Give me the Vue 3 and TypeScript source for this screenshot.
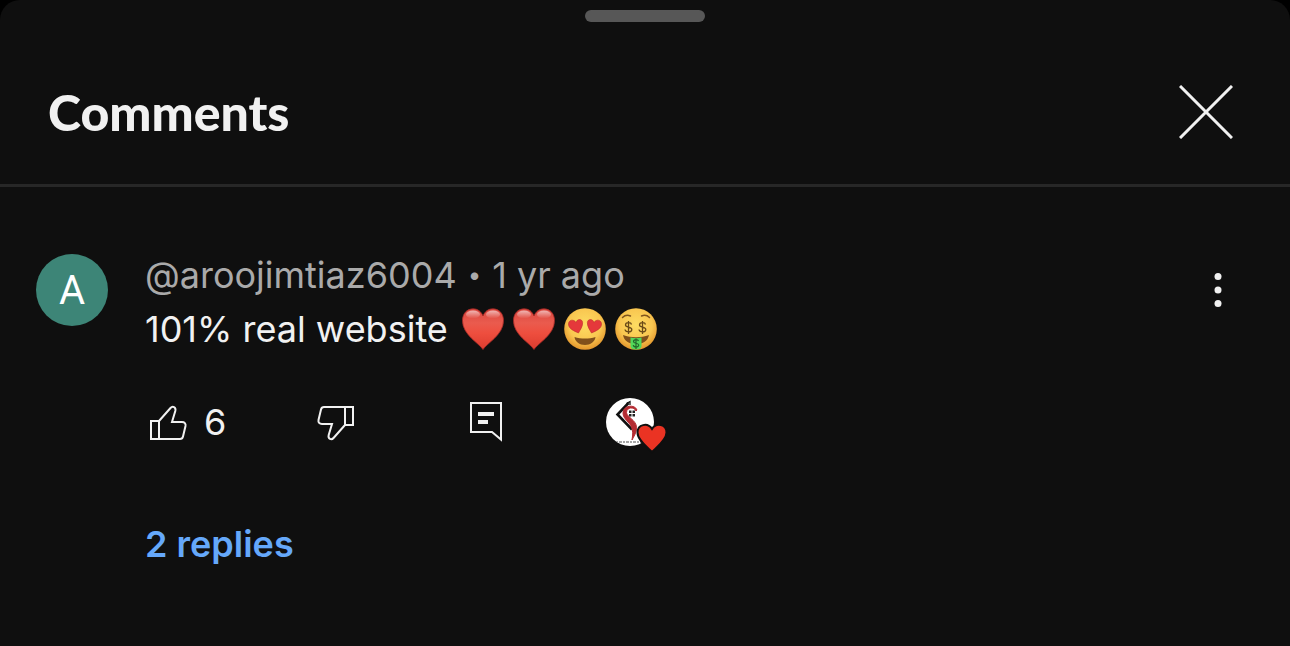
<script setup lang="ts">
interface Comment {
  initial: string
  author: string
  age: string
  text: string
  likes: number
  replies: number
}

const comment: Comment = {
  initial: 'A',
  author: '@aroojimtiaz6004',
  age: '1 yr ago',
  text: '101% real website',
  likes: 6,
  replies: 2,
}
</script>

<template>
  <main class="sheet">
    <header class="header">
      <span class="grabber"></span>
      <div class="title-row">
        <h1 class="title">Comments</h1>
        <button class="icon-button" type="button" aria-label="Close">
          <svg width="54" height="54" viewBox="0 0 54 54" fill="none" stroke="#f1f1f1" stroke-width="3">
            <path d="M1 1L53 53M53 1L1 53" />
          </svg>
        </button>
      </div>
    </header>

    <article class="comment">
      <span class="avatar">{{ comment.initial }}</span>
      <div class="body">
        <p class="meta">
          <span>{{ comment.author }}</span>
          <span class="dot">•</span>
          <span>{{ comment.age }}</span>
        </p>
        <p class="text">
          <span>{{ comment.text }}</span>
          <span class="emojis">
            <svg v-for="n in 2" :key="n" width="42" height="42" viewBox="0 0 42 42" role="img" aria-label="Red heart">
              <defs>
                <linearGradient :id="`heart-${n}`" x1="0" y1="0" x2="0" y2="1">
                  <stop offset="0" stop-color="#d9473f" />
                  <stop offset="0.35" stop-color="#ea5b4e" />
                  <stop offset="0.6" stop-color="#ee4e3e" />
                  <stop offset="1" stop-color="#dc3c2f" />
                </linearGradient>
                <linearGradient :id="`shine-${n}`" x1="0" y1="0" x2="0" y2="1">
                  <stop offset="0" stop-color="#fff" stop-opacity="0.6" />
                  <stop offset="1" stop-color="#fff" stop-opacity="0" />
                </linearGradient>
              </defs>
              <path :fill="`url(#heart-${n})`" stroke="#a82a26" stroke-width="0.8" d="M21 41.500C17 35 0.500 27 0.500 12.500C0.500 5.500 5 0.800 11.200 0.800C16 0.800 19.500 4 21 8C22.500 4 26 0.800 30.800 0.800C37 0.800 41.500 5.500 41.500 12.500C41.500 27 25 35 21 41.500Z" />
              <g :fill="`url(#shine-${n})`">
                <ellipse cx="11" cy="6.500" rx="7" ry="4" />
                <ellipse cx="31" cy="6.500" rx="7" ry="4" />
              </g>
            </svg>
            <svg width="42" height="42" viewBox="0 0 42 42" role="img" aria-label="Smiling face with heart eyes">
              <defs>
                <radialGradient id="face" cx="0.5" cy="0.4" r="0.6">
                  <stop offset="0" stop-color="#fddc62" />
                  <stop offset="0.65" stop-color="#f9c650" />
                  <stop offset="1" stop-color="#e2952c" />
                </radialGradient>
              </defs>
              <circle cx="21" cy="21" r="20.800" fill="url(#face)" />
              <g fill="#e5383b" stroke="#bd2b2b" stroke-width="0.6">
                <path d="M14.500 25C10 23 4 20.500 4.500 15.500C5 11.500 10 11 12 14.500C13 10.500 18.300 10.500 18.600 14.500C18.900 18.500 16 22 14.500 25Z" />
                <path d="M27.500 25C32 23 38 20.500 37.500 15.500C37 11.500 32 11 30 14.500C29 10.500 23.700 10.500 23.400 14.500C23.100 18.500 26 22 27.500 25Z" />
              </g>
              <path d="M10.500 29C17 31 25 31 31.500 29C31 33.500 26.500 37 21 37S11 33.500 10.500 29Z" fill="#80501b" />
            </svg>
            <svg width="42" height="42" viewBox="0 0 42 42" role="img" aria-label="Money-mouth face">
              <circle cx="21" cy="21" r="20.800" fill="url(#face)" />
              <path d="M7.500 9.500Q11 6 15.500 8M26.500 8Q31 6 34.500 9.500" fill="none" stroke="#80551d" stroke-width="1.500" stroke-linecap="round" />
              <g fill="none" stroke="#6b4a18" stroke-width="1.300">
                <path id="dollar" d="M16.500 16.500C16 14 10.500 14 10.500 17C10.500 20 16.800 18 16.800 21.500C16.800 25 10.500 24.500 10 21.500M13.500 13V26" />
                <use href="#dollar" x="14" />
              </g>
              <path d="M8 27C16 30 26 30 34 27C33 33 28 36 21 36S9 33 8 27Z" fill="#80501b" />
              <path d="M15.500 29.500Q21 31 26.500 29.500V38Q26.500 41.500 21 41.500T15.500 38Z" fill="#52d85a" />
              <path d="M23.500 33C23 31 18.500 31 18.500 33.500C18.500 36 23.700 34.500 23.700 37C23.700 40 18.500 39.500 18.300 37M21 30.500V41" fill="none" stroke="#23672b" stroke-width="1.200" />
            </svg>
          </span>
        </p>

        <div class="actions">
          <button class="action like" type="button" aria-label="Like">
            <svg width="38" height="38" viewBox="0 -2 38 38" fill="none" stroke="#f1f1f1" stroke-width="2">
              <path d="M2 16H10V34H2ZM10 16L21.500 3C23.500 0.800 27.300 2 26.300 6L23 17H33C35.500 17 37 18.500 36.500 21L34 31.500C33.500 33.500 32.500 34 31 34H10" />
            </svg>
            <span>{{ comment.likes }}</span>
          </button>
          <button class="action dislike" type="button" aria-label="Dislike">
            <svg width="38" height="38" viewBox="0 -2 38 38" fill="none" stroke="#f1f1f1" stroke-width="2">
              <path d="M36 20H28V2H36ZM28 20L16.500 33C14.500 35.200 10.700 34 11.700 30L15 19H5C2.500 19 1 17.500 1.500 15L4 4.500C4.500 2.500 5.500 2 7 2H28" />
            </svg>
          </button>
          <button class="action reply" type="button" aria-label="Reply">
            <svg width="34" height="40" viewBox="0 0 34 40" fill="none">
              <path d="M2 1H32V37.500L23 30H2Z" stroke="#f1f1f1" stroke-width="2" />
              <path d="M9 10H25V14H9ZM9 18H19V22H9Z" fill="#f1f1f1" />
            </svg>
          </button>
          <span class="creator">
            <svg width="62" height="56" viewBox="0 0 62 56" role="img" aria-label="Loved by the creator">
              <defs>
                <clipPath id="disc"><circle cx="24" cy="24" r="24" /></clipPath>
              </defs>
              <circle cx="24" cy="24" r="24" fill="#fff" />
              <g clip-path="url(#disc)">
                <path d="M22.500 5L11.500 16.500L26 31.500" fill="none" stroke="#111" stroke-width="2.600" />
                <path d="M20.500 5.500L24 3.500V7" fill="none" stroke="#111" stroke-width="1.300" />
                <path d="M30 13C28.500 8.500 20.500 9 20.500 14.500C20.500 19 30.500 22 30.500 29.500C30.500 35 28 38 26 42C27 36 27 33 25.500 29C23.500 24 17 21 17 15C17 7 29 6 31 12Z" fill="#b32b32" stroke="#b32b32" stroke-width="1" />
                <path d="M23 12.500H25.500V15H23ZM26.500 12.500H29V15H26.500ZM23 16H25.500V18.500H23ZM26.500 16H29V18.500H26.500Z" fill="#222" />
                <path d="M10 44H37" stroke="#8a8a8a" stroke-width="1.500" stroke-dasharray="2 1 3 1" />
              </g>
              <path d="M46 54C41 49 31.500 42 31.500 34.500C31.500 26.500 41.500 24 46 31C50.500 24 60.500 26.500 60.500 34.500C60.500 42 51 49 46 54Z" fill="#ea3323" stroke="#0f0f0f" stroke-width="2" />
            </svg>
          </span>
        </div>

        <button class="replies" type="button">{{ comment.replies }} replies</button>
      </div>
      <button class="icon-button more" type="button" aria-label="More options">
        <svg width="8" height="36" viewBox="0 0 8 36" fill="#f1f1f1">
          <circle cx="4" cy="4.500" r="3.500" />
          <circle cx="4" cy="18" r="3.500" />
          <circle cx="4" cy="31.500" r="3.500" />
        </svg>
      </button>
    </article>
  </main>
</template>

<style>
body {
  background: #000;
}
</style>

<style scoped>
.sheet {
  box-sizing: border-box;
  min-height: 100vh;
  background: #0f0f0f;
  border-radius: 20px 20px 0 0;
  color: #f1f1f1;
  font-family: Inter, "Liberation Sans", sans-serif;
  font-size: 36px;
}

svg {
  display: block;
}

button {
  padding: 0;
  border: 0;
  background: none;
  color: inherit;
  font: inherit;
  cursor: pointer;
}

.header {
  display: flex;
  flex-direction: column;
  padding-top: 10px;
  border-bottom: 3px solid #272727;
}

.grabber {
  align-self: center;
  width: 120px;
  height: 12px;
  border-radius: 6px;
  background: #575757;
}

.title-row {
  display: flex;
  align-items: center;
  justify-content: space-between;
  padding: 54px 57px 36px 48px;
}

.title {
  margin: 0;
  font-family: Lato, "Noto Sans", sans-serif;
  font-size: 50px;
  font-weight: 900;
  line-height: 72px;
}

.comment {
  display: flex;
  align-items: flex-start;
  padding: 61px 68px 48px 36px;
}

.avatar {
  display: flex;
  flex: none;
  align-items: center;
  justify-content: center;
  width: 72px;
  height: 72px;
  margin: 6px 37px 0 0;
  border-radius: 50%;
  background: #3d8577;
  color: #fff;
  font-family: Roboto, sans-serif;
  font-size: 40px;
}

.body {
  flex: 1;
  min-width: 0;
}

.meta,
.text {
  display: flex;
  align-items: center;
  margin: 0;
  line-height: 54px;
}

.meta {
  gap: 11px;
  color: #aaa;
}

.dot {
  font-size: 24px;
}

.text {
  gap: 14px;
}

.emojis {
  display: flex;
  gap: 9px;
}

.actions {
  display: flex;
  align-items: flex-start;
  height: 56px;
  margin-top: 42px;
  padding-left: 4px;
}

.action {
  display: flex;
  align-items: center;
  height: 48px;
}

.like {
  gap: 17px;
  width: 168px;
}

.dislike {
  width: 152px;
}

.reply {
  width: 137px;
}

.replies {
  display: block;
  margin-top: 62px;
  color: #65a8fa;
  font-weight: 600;
  line-height: 56px;
}

.more {
  margin-top: 24px;
}
</style>
